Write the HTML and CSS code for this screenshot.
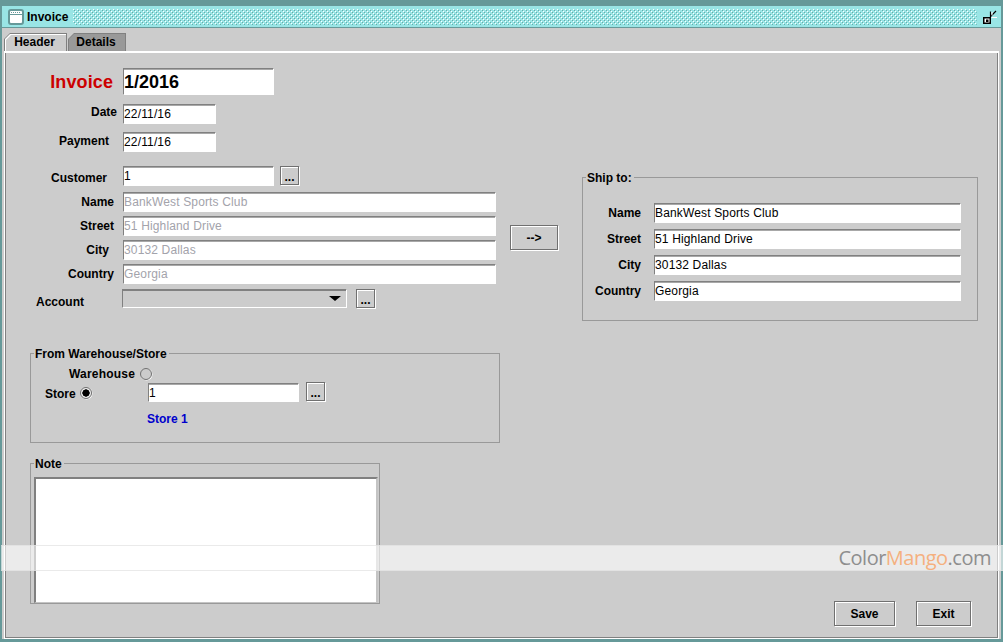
FILE: index.html
```html
<!DOCTYPE html>
<html lang="en">
<head>
<meta charset="utf-8">
<title>Invoice</title>
<link rel="stylesheet" href="styles.css">
</head>
<body>
<div class="window">
  <div class="frame">
    <header class="titlebar">
      <svg class="win-icon" width="16" height="16" viewBox="0 0 16 16"><rect x="1" y="1" width="14" height="14" rx="2" fill="#fff" stroke="#669999" stroke-width="2"/><path d="M2 5.5h12" stroke="#669999"/><path d="M3 3.5h10" stroke="#669999" stroke-dasharray="1 1"/></svg>
      <span class="title">Invoice</span>
      <svg class="bumps" height="16">
        <defs>
          <pattern id="bump" width="4" height="4" patternUnits="userSpaceOnUse">
            <rect x="0" y="0" width="1" height="1" fill="#ffffff"/>
            <rect x="2" y="2" width="1" height="1" fill="#ffffff"/>
            <rect x="1" y="1" width="1" height="1" fill="#66aaaa"/>
            <rect x="3" y="3" width="1" height="1" fill="#66aaaa"/>
          </pattern>
        </defs>
        <rect width="100%" height="100%" fill="url(#bump)"/>
      </svg>
      <svg class="resize-icon" width="14" height="14" viewBox="0 0 14 14"><rect x="0.75" y="7.75" width="6.5" height="5.5" fill="#fff" stroke="#000" stroke-width="1.5"/><rect x="3" y="9.5" width="2.5" height="2.5" fill="#000"/><path d="M7.5 7V1.5M7.5 6.5L13 1" stroke="#000" fill="none" stroke-width="1.2"/><path d="M8.5 7.5H14M9 2v3.5" stroke="#fff" fill="none"/></svg>
    </header>
    <nav class="tabs">
      <div class="tab tab-active"><span>Header</span></div>
      <div class="tab tab-idle"><span>Details</span></div>
    </nav>
    <main class="panel">
      <section class="left">
        <div class="row row-invoice">
          <label class="lbl lbl-invoice">Invoice</label>
          <input class="field field-invoice" value="1/2016">
        </div>
        <div class="row row-date">
          <label class="lbl pr6 up4">Date</label>
          <input class="field field-short" value="22/11/16">
        </div>
        <div class="row row-pay">
          <label class="lbl pr14 up2">Payment</label>
          <input class="field field-short" value="22/11/16">
        </div>
        <div class="row row-cust">
          <label class="lbl pr16 down4">Customer</label>
          <input class="field field-mid" value="1">
          <button class="btn btn-dots btn-lift">...</button>
        </div>
        <div class="row row-addr">
          <label class="lbl pr9">Name</label>
          <input class="field field-long off" value="BankWest Sports Club">
        </div>
        <div class="row row-addr2">
          <label class="lbl pr9">Street</label>
          <input class="field field-long off" value="51 Highland Drive">
        </div>
        <div class="row row-addr2">
          <label class="lbl pr14">City</label>
          <input class="field field-long off" value="30132 Dallas">
        </div>
        <div class="row row-addr2">
          <label class="lbl pr9">Country</label>
          <input class="field field-long off" value="Georgia">
        </div>
        <div class="row row-acct">
          <label class="lbl lbl-acct down8">Account</label>
          <div class="combo"><span class="caret"></span></div>
          <button class="btn btn-dots btn-acct">...</button>
        </div>

        <div class="group group-store">
          <span class="legend">From Warehouse/Store</span>
          <div class="radio-row">
            <span class="radio-label">Warehouse</span>
            <span class="radio"></span>
          </div>
          <div class="store-row">
            <span class="store-label">Store</span>
            <span class="radio radio-on"></span>
            <input class="field field-store" value="1">
            <button class="btn btn-dots btn-store">...</button>
          </div>
          <div class="store-name">Store 1</div>
        </div>

        <div class="group group-note">
          <span class="legend">Note</span>
          <textarea class="note"></textarea>
        </div>
      </section>

      <section class="right">
        <div class="ship-line">
          <button class="btn btn-arrow">--&gt;</button>
          <div class="group group-ship">
            <span class="legend">Ship to:</span>
            <div class="ship-row"><label class="lbl-ship">Name</label><input class="field field-ship" value="BankWest Sports Club"></div>
            <div class="ship-row"><label class="lbl-ship">Street</label><input class="field field-ship" value="51 Highland Drive"></div>
            <div class="ship-row"><label class="lbl-ship">City</label><input class="field field-ship" value="30132 Dallas"></div>
            <div class="ship-row"><label class="lbl-ship">Country</label><input class="field field-ship" value="Georgia"></div>
          </div>
        </div>
        <div class="actions">
          <button class="btn btn-save">Save</button>
          <button class="btn btn-exit">Exit</button>
        </div>
      </section>
    </main>
  </div>
  <div class="watermark"><span class="wm-grey">Color</span><span class="wm-orange">Mango</span><span class="wm-grey">.com</span></div>
</div>
</body>
</html>
```
FILE: styles.css
```css
* { box-sizing: border-box; }
html, body { margin: 0; padding: 0; }
body { font-family: "Liberation Sans", Arial, sans-serif; font-size: 12px; color: #000; overflow: hidden; }

.window { position: relative; width: 1003px; height: 642px; background: #669999; padding: 6px 2px 3px; }
.frame { height: 100%; display: flex; flex-direction: column; background: #cccccc; }

.titlebar { height: 22px; flex: none; display: flex; align-items: center; background: #99e5e5; border-bottom: 1px solid #669999; padding: 0 4px 0 6px; }
.win-icon { flex: none; }
.title { font-weight: bold; margin-left: 3px; padding-top: 1px; }
.bumps { flex: 1; min-width: 0; margin: 0 6px 0 5px; }
.resize-icon { flex: none; }

.tabs { height: 23px; flex: none; display: flex; align-items: flex-end; padding-left: 2px; }
.tab { position: relative; height: 18px; font-weight: bold; display: flex; align-items: center; justify-content: center; background: #808080;
  clip-path: polygon(6px 0, 100% 0, 100% 100%, 0 100%, 0 6px); }
.tab::before { content: ""; position: absolute; inset: 1px 1px 0 1px; background: #fff; clip-path: polygon(5px 0, 100% 0, 100% 100%, 0 100%, 0 5px); }
.tab::after { content: ""; position: absolute; inset: 2px 1px 0 2px; clip-path: polygon(5px 0, 100% 0, 100% 100%, 0 100%, 0 5px); }
.tab span { position: relative; z-index: 1; padding-right: 2px; }
.tab-active { width: 63px; }
.tab-active::after { background: #cccccc; }
.tab-idle { width: 58px; margin-left: 1px; }
.tab-idle::before { background: #999999; }
.tab-idle::after { background: #999999; }

.panel { flex: 1; min-height: 0; display: flex; gap: 10px; border-top: 2px solid #fff; border-left: 1px solid #fff; border-right: 1px solid #fff; border-bottom: 1px solid #fff; margin: 0 2px 0 2px; box-shadow: inset 1px 0 0 #808080, inset -1px 0 0 #808080, inset 0 -1px 0 #808080; padding: 15px 0 12px 25px; }

.left { width: 470px; flex: none; display: flex; flex-direction: column; }
.row { display: flex; align-items: center; }
.row-invoice { height: 27px; }
.row-date { height: 20px; margin-top: 9px; }
.row-pay { height: 20px; margin-top: 8px; }
.row-cust { height: 20px; margin-top: 14px; }
.row-addr { height: 20px; margin-top: 6px; }
.row-addr2 { height: 20px; margin-top: 4px; }
.row-acct { height: 20px; margin-top: 4px; }

.lbl { width: 93px; flex: none; text-align: right; font-weight: bold; white-space: nowrap; }
.lbl-invoice { font-size: 18px; color: #cc0000; padding: 2px 10px 0 0; letter-spacing: .1px; }
.lbl-acct { width: 92px; padding-right: 38px; }
.pr6 { padding-right: 6px; }
.pr9 { padding-right: 9px; }
.pr14 { padding-right: 14px; }
.pr16 { padding-right: 16px; }
.up4 { padding-bottom: 4px; }
.up2 { padding-bottom: 2px; }
.down4 { padding-top: 4px; }
.down8 { padding-top: 8px; }

.field { display: block; height: 20px; padding: 1px 0 2px 0; margin: 0; background: #fff; color: #000; font: 12px "Liberation Sans", Arial, sans-serif; letter-spacing: .15px; border-style: solid; border-width: 1px; border-color: #808080 #fff #fff #808080; box-shadow: inset 0 1px 0 #a8a8a8; outline: none; }
.field-invoice { width: 151px; height: 27px; padding: 1px 0 0 0; font-size: 18px; font-weight: bold; letter-spacing: 0; }
.field-short { width: 93px; }
.field-mid { width: 151px; }
.field-long { width: 373px; }
.off { color: #a3a3ab; }

.btn { display: block; padding: 0; margin: 0; background: #cccccc; font: bold 12px "Liberation Sans", Arial, sans-serif; color: #000; border: 1px solid #707070; box-shadow: inset 1px 1px 0 #fff, 1px 1px 0 #fff; }
.btn-dots { width: 19px; height: 19px; margin-left: 6px; line-height: 17px; padding-top: 2px; }
.btn-lift { margin-bottom: 2px; }
.btn-store { margin: 0 0 1px 7px; }
.btn-acct { margin-left: 9px; }

.combo { width: 225px; height: 19px; position: relative; background: #ccc; border: 1px solid #808080; border-right-color: #fff; border-bottom-color: #fff; box-shadow: inset 0 1px 0 #808080; }
.caret { position: absolute; right: 5px; top: 6px; width: 0; height: 0; border-style: solid; border-width: 5px 6px 0 6px; border-color: #000 transparent transparent transparent; }

.group { position: relative; border: 1px solid #999999; }
.legend { position: absolute; left: 3px; top: -7px; padding: 0 2px 0 1px; background: #cccccc; font-weight: bold; line-height: 14px; white-space: nowrap; }

.group-store { height: 90px; margin-top: 45px; padding-top: 13px; }
.radio-row { display: flex; align-items: center; height: 13px; margin-left: 38px; gap: 5px; font-weight: bold; letter-spacing: .2px; }
.radio { display: block; flex: none; width: 12px; height: 12px; border-radius: 50%; border: 1px solid #707070; background: #ccc; box-shadow: 0.5px 0.5px 0 #fff; }
.radio-on { margin-top: 2px; background: radial-gradient(circle, #000 0 3.4px, #eee 3.9px); }
.store-row { display: flex; align-items: center; height: 20px; margin-left: 14px; margin-top: 2px; font-weight: bold; }
.store-label { width: 35px; padding-top: 4px; }
.field-store { width: 151px; height: 19px; margin-left: 56px; padding-bottom: 0; }
.store-name { margin: 10px 0 0 116px; font-weight: bold; color: #0000cc; line-height: 14px; }

.group-note { height: 141px; width: 350px; margin-top: 20px; padding: 13px 1px 0 3px; }
.note { display: block; width: 344px; height: 126px; resize: none; margin: 0; padding: 0; background: #fff; border-style: solid; border-width: 2px 2px 1px 2px; border-color: #808080 #c4c4c4 #c4c4c4 #808080; outline: none; }

.right { width: 468px; flex: none; display: flex; flex-direction: column; }
.ship-line { display: flex; gap: 24px; margin-top: 109px; }
.btn-arrow { width: 48px; height: 25px; margin-top: 48px; flex: none; }
.group-ship { width: 396px; height: 144px; padding-top: 25px; }
.ship-row { display: flex; align-items: center; height: 20px; margin-bottom: 6px; }
.lbl-ship { width: 71px; flex: none; text-align: right; padding-right: 13px; font-weight: bold; }
.field-ship { width: 307px; }

.actions { margin-top: auto; display: flex; justify-content: flex-end; gap: 21px; padding-right: 7px; }
.btn-save { width: 61px; height: 25px; }
.btn-exit { width: 55px; height: 25px; }

.watermark { position: absolute; left: 1px; right: 0; top: 545px; height: 26px; background: rgba(255,255,255,.6); border-top: 1px solid rgba(220,220,220,.6); border-bottom: 1px solid rgba(220,220,220,.6); text-align: right; padding-right: 12px; font: 20px/24px "Open Sans", sans-serif; letter-spacing: -.5px; }
.wm-grey { color: #8e8e8e; }
.wm-orange { color: #f5b07f; }
```
